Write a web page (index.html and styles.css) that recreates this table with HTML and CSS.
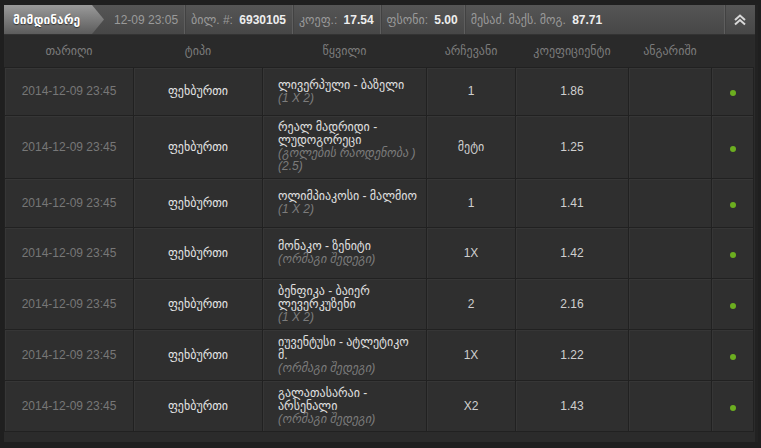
FILE: index.html
```html
<!DOCTYPE html>
<html lang="ka">
<head>
  <meta charset="UTF-8">
  <title>მიმდინარე ფსონები</title>
  <link rel="stylesheet" href="styles.css">
</head>
<body>
  <div class="panel">
    <div class="topbar">
      <div class="tab">მიმდინარე</div>
      <div class="info first">12-09 23:05</div>
      <div class="info">ბილ. #: <b>6930105</b></div>
      <div class="info">კოეფ.: <b>17.54</b></div>
      <div class="info">ფსონი: <b>5.00</b></div>
      <div class="info grow">მესაძ. მაქს. მოგ. <b>87.71</b></div>
      <div class="collapse">
        <svg width="14" height="14" viewBox="0 0 14 14">
          <path d="M2 7 L7 2.5 L12 7 M2 11.5 L7 7 L12 11.5" fill="none" stroke="#d8d8d8" stroke-width="2"/>
        </svg>
      </div>
    </div>

    <table class="bets">
      <colgroup>
        <col style="width:129px">
        <col style="width:129px">
        <col style="width:164px">
        <col style="width:89px">
        <col style="width:113px">
        <col style="width:83px">
        <col style="width:42px">
      </colgroup>
      <thead>
        <tr>
          <th>თარიღი</th>
          <th>ტიპი</th>
          <th>წყვილი</th>
          <th>არჩევანი</th>
          <th>კოეფიციენტი</th>
          <th>ანგარიში</th>
          <th></th>
        </tr>
      </thead>
      <tbody>
        <tr class="r48">
          <td class="date">2014-12-09 23:45</td>
          <td class="sport">ფეხბურთი</td>
          <td class="match">ლივერპული - ბაზელი<span class="sub">(1 X 2)</span></td>
          <td>1</td>
          <td>1.86</td>
          <td></td>
          <td><span class="dot"></span></td>
        </tr>
        <tr class="r64">
          <td class="date">2014-12-09 23:45</td>
          <td class="sport">ფეხბურთი</td>
          <td class="match">რეალ მადრიდი - ლუდოგორეცი<span class="sub">(გოლების რაოდენობა )<br>(2.5)</span></td>
          <td>მეტი</td>
          <td>1.25</td>
          <td></td>
          <td><span class="dot"></span></td>
        </tr>
        <tr class="r49">
          <td class="date">2014-12-09 23:45</td>
          <td class="sport">ფეხბურთი</td>
          <td class="match">ოლიმპიაკოსი - მალმიო<span class="sub">(1 X 2)</span></td>
          <td>1</td>
          <td>1.41</td>
          <td></td>
          <td><span class="dot"></span></td>
        </tr>
        <tr class="r51">
          <td class="date">2014-12-09 23:45</td>
          <td class="sport">ფეხბურთი</td>
          <td class="match">მონაკო - ზენიტი<span class="sub">(ორმაგი შედეგი)</span></td>
          <td>1X</td>
          <td>1.42</td>
          <td></td>
          <td><span class="dot"></span></td>
        </tr>
        <tr class="r51">
          <td class="date">2014-12-09 23:45</td>
          <td class="sport">ფეხბურთი</td>
          <td class="match">ბენფიკა - ბაიერ ლევერკუზენი<span class="sub">(1 X 2)</span></td>
          <td>2</td>
          <td>2.16</td>
          <td></td>
          <td><span class="dot"></span></td>
        </tr>
        <tr class="r51">
          <td class="date">2014-12-09 23:45</td>
          <td class="sport">ფეხბურთი</td>
          <td class="match">იუვენტუსი - ატლეტიკო მ.<span class="sub">(ორმაგი შედეგი)</span></td>
          <td>1X</td>
          <td>1.22</td>
          <td></td>
          <td><span class="dot"></span></td>
        </tr>
        <tr class="r51">
          <td class="date">2014-12-09 23:45</td>
          <td class="sport">ფეხბურთი</td>
          <td class="match">გალათასარაი - არსენალი<span class="sub">(ორმაგი შედეგი)</span></td>
          <td>X2</td>
          <td>1.43</td>
          <td></td>
          <td><span class="dot"></span></td>
        </tr>
      </tbody>
    </table>
  </div>
</body>
</html>
```

FILE: styles.css
```css
body {
  margin: 0;
  background: #1f1f1f;
  font-family: "Liberation Sans", "DejaVu Sans", sans-serif;
  font-size: 12px;
  color: #d6d6d6;
}

.panel {
  margin: 5px 0 0 4px;
  width: 751px;
  background: #2b2b2b;
  padding-bottom: 10px;
  border-right: 3px solid #222;
}

/* top bar */

.topbar {
  display: flex;
  align-items: center;
  height: 29px;
  background: linear-gradient(#555, #474747);
  border-bottom: 1px solid #333;
  color: #9a9a9a;
}

.tab {
  width: 100px;
  height: 100%;
  display: flex;
  align-items: center;
  padding-left: 9px;
  box-sizing: border-box;
  background: linear-gradient(#9a9a9a, #5c5c5c);
  clip-path: polygon(0 0, 88px 0, 100% 50%, 88px 100%, 0 100%);
  color: #fff;
  font-weight: bold;
  text-transform: uppercase;
  text-shadow: 0 1px 1px #333;
}

.info {
  height: 100%;
  display: flex;
  align-items: center;
  padding: 0 6px;
  border-left: 1px solid #5e5e5e;
  box-shadow: inset 1px 0 0 #424242;
  white-space: pre;
}

.info.first {
  border-left: none;
  box-shadow: none;
  padding-left: 10px;
}

.info b {
  color: #eee;
  margin-left: 3px;
}

.info.grow {
  flex: 1;
}

.collapse {
  width: 30px;
  height: 100%;
  display: flex;
  align-items: center;
  justify-content: center;
  border-left: 1px solid #5e5e5e;
  box-shadow: inset 1px 0 0 #424242;
}

/* table */

.bets {
  width: 749px;
  border-collapse: collapse;
  table-layout: fixed;
}

.bets th {
  height: 32px;
  padding: 0;
  font-weight: normal;
  color: #7c7c7c;
  text-transform: uppercase;
  background: #2a2a2a;
}

.bets td {
  padding: 5px 6px;
  line-height: 13px;
  text-align: center;
  background: #2f2f2f;
  border: 1px solid #212121;
  box-shadow: inset 1px 1px 0 #363636;
  color: #cfcfcf;
}

.r48 td { height: 37px; }
.r49 td { height: 38px; }
.r51 td { height: 40px; }
.r64 td { height: 52px; }

.bets td.date {
  color: #777;
}

.bets td.sport {
  color: #e4e4e4;
}

.bets td.match {
  text-align: left;
  padding-left: 15px;
  color: #e0e0e0;
}

.sub {
  display: block;
  font-style: italic;
  color: #7c7c7c;
}

.dot {
  display: inline-block;
  width: 6px;
  height: 6px;
  border-radius: 50%;
  background: #6cae20;
  margin-top: 6px;
}
```
